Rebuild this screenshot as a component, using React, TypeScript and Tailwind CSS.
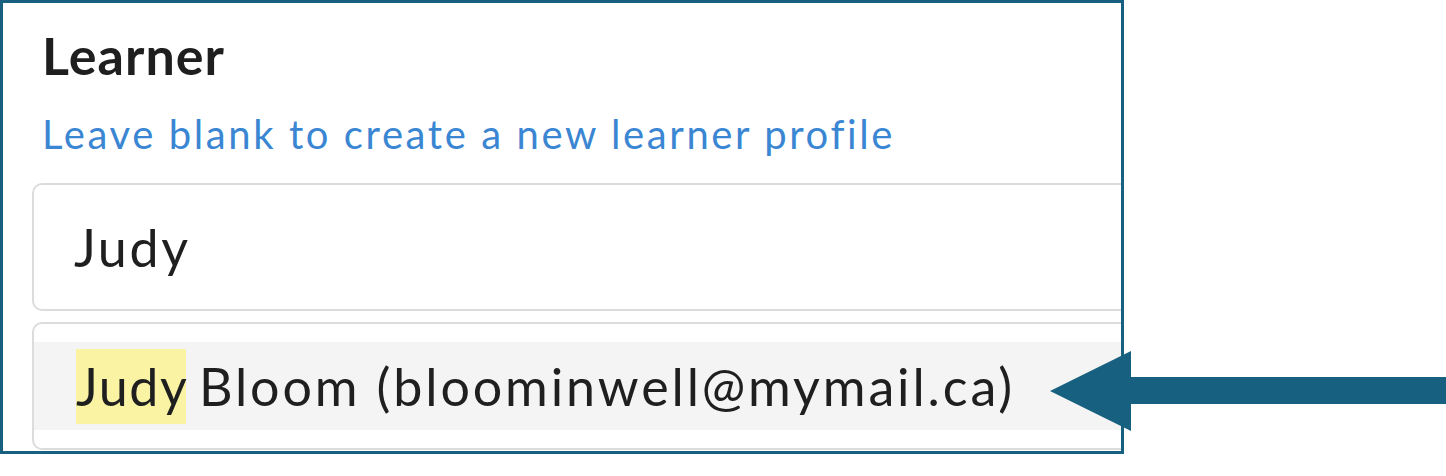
export default function App() {
  return (
    <div className="relative w-[1446px] h-[476px] bg-white" style={{ fontFamily: 'Lato, "Open Sans", sans-serif' }}>
      <div className="w-[1124px] h-[454px] border-[3px] border-[#17607f] overflow-hidden pl-[29px] pt-[26px]">
        {/* Field label */}
        <h2 className="ml-[10px] text-[52px] leading-[52px] font-bold tracking-[0.02em] text-[#1f1f1f]">Learner</h2>
        <p className="ml-[10px] mt-[33px] text-[40px] leading-[40px] tracking-[0.065em] text-[#3a86d3]">
          Leave blank to create a new learner profile
        </p>

        {/* Search input */}
        <div className="mt-[29px] w-[1200px] h-[128px] border-2 border-[#dcdcdc] rounded-[10px] flex items-center pl-[40px]">
          <span className="text-[52px] tracking-[0.05em] text-[#1f1f1f]">Judy</span>
        </div>

        {/* Suggestions */}
        <div className="mt-[11px] w-[1200px] h-[128px] border-2 border-[#dcdcdc] rounded-[10px] pt-[18px]">
          <div className="h-[88px] bg-[#f4f4f4] flex items-center pl-[42px] text-[52px] text-[#1f1f1f]">
            <mark className="w-[110px] bg-[#faf3a3] text-[#1f1f1f] leading-[75px] tracking-[0.03em] inline-block whitespace-nowrap">Judy</mark>
            <span className="ml-[13px] tracking-[0.055em]">Bloom (bloominwell@mymail.ca)</span>
          </div>
        </div>
      </div>

      {/* Callout arrow */}
      <svg className="absolute left-[1050px] top-[351px]" width="396" height="80" viewBox="0 0 396 80">
        <path d="M0 40 L81 0 L81 26 L396 26 L396 53 L81 53 L81 80 Z" fill="#17607f" />
      </svg>
    </div>
  );
}
